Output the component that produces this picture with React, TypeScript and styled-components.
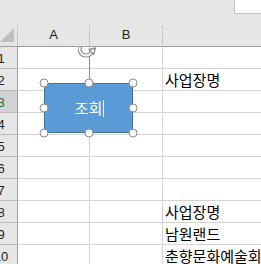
import React from 'react'
import styled, { createGlobalStyle } from 'styled-components'

const GlobalStyle = createGlobalStyle`
  html, body {
    margin: 0;
    padding: 0;
    background: #ffffff;
    overflow: hidden;
  }
`

const Page = styled.div`
  width: 261px;
  height: 264px;
  overflow: hidden;
  background: #ffffff;
  font-family: 'Noto Sans CJK KR', 'Noto Sans', sans-serif;
`

const TopBar = styled.div`
  height: 25px;
  background: #e6e6e6;
  display: flex;
  justify-content: flex-end;
  align-items: flex-start;
`

const NameBox = styled.div`
  width: 27px;
  height: 14px;
  box-sizing: border-box;
  background: #ffffff;
  border-left: 1px solid #c6c6c6;
  border-bottom: 1px solid #c6c6c6;
`

const Sheet = styled.div`
  margin-left: -15px;
  width: 478px;
`

const COLS = '33px 72px 73px 300px'

const HeaderRow = styled.div`
  display: grid;
  grid-template-columns: ${COLS};
  height: 22px;
  background: #e6e6e6;
`

const Corner = styled.div`
  box-sizing: border-box;
  border-right: 1px solid #c6c6c6;
  border-bottom: 1px solid #9e9e9e;
  display: flex;
  justify-content: flex-end;
  align-items: flex-end;
  padding: 0 3px 4px 0;
`

const SelectAll = styled.div`
  width: 14px;
  height: 14px;
  background: #bfbfbf;
  clip-path: polygon(100% 0, 100% 100%, 0 100%);
`

const ColHead = styled.div`
  box-sizing: border-box;
  border-right: 1px solid #c6c6c6;
  border-bottom: 1px solid #9e9e9e;
  display: flex;
  justify-content: center;
  align-items: center;
  padding-bottom: 3px;
  font-family: 'Liberation Sans', Arial, sans-serif;
  font-size: 13px;
  color: #222222;
`

const Body = styled.div`
  position: relative;
  overflow: hidden;
`

const Row = styled.div`
  display: grid;
  grid-template-columns: ${COLS};
  height: 22px;
`

const RowHead = styled.div<{ $active?: boolean }>`
  box-sizing: border-box;
  background: ${p => (p.$active ? '#d2d2d2' : '#e6e6e6')};
  border-right: 1px solid #9e9e9e;
  border-bottom: 1px solid #bcbcbc;
  display: flex;
  justify-content: center;
  align-items: center;
  padding-top: 1px;
  font-family: 'Liberation Sans', Arial, sans-serif;
  font-size: 13px;
  color: ${p => (p.$active ? '#217346' : '#222222')};
`

const Cell = styled.div`
  box-sizing: border-box;
  border-right: 1px solid #d4d4d4;
  border-bottom: 1px solid #d4d4d4;
  display: flex;
  align-items: flex-end;
  padding: 0 0 1px 2px;
  font-size: 15px;
  line-height: 18px;
  color: #000000;
  white-space: nowrap;
  overflow: hidden;
`

const Shape = styled.div`
  position: absolute;
  left: 59px;
  top: 36px;
  width: 89px;
  height: 50px;
  background: #5b9bd5;
  box-shadow: inset 0 0 0 1px #41719c;
  display: flex;
  justify-content: center;
  align-items: center;
  padding-left: 2px;
  box-sizing: border-box;
  color: #ffffff;
  font-size: 15px;
  line-height: 18px;
`

const Caret = styled.span`
  display: inline-block;
  width: 1px;
  height: 17px;
  margin-left: 1px;
  background: #ffffff;
`

const Handle = styled.div<{ $x: number; $y: number }>`
  position: absolute;
  left: ${p => p.$x}%;
  top: ${p => p.$y}%;
  width: 9px;
  height: 9px;
  box-sizing: border-box;
  border-radius: 50%;
  background: #ffffff;
  border: 1.5px solid #8c8c8c;
  transform: translate(-50%, -50%);
`

const RotateStem = styled.div`
  position: absolute;
  left: 45px;
  bottom: 100%;
  width: 1px;
  height: 26px;
  background: #8c8c8c;
`

const RotateIcon = styled.svg`
  position: absolute;
  left: 34px;
  top: -43px;
`

const rows = [
  { n: 1, c: '' },
  { n: 2, c: '사업장명' },
  { n: 3, c: '', active: true },
  { n: 4, c: '' },
  { n: 5, c: '' },
  { n: 6, c: '' },
  { n: 7, c: '' },
  { n: 8, c: '사업장명' },
  { n: 9, c: '남원랜드' },
  { n: 10, c: '춘향문화예술회관' },
]

const handles = [
  [0, 0], [50, 0], [100, 0],
  [0, 50], [100, 50],
  [0, 100], [50, 100], [100, 100],
]

const arc = 'M8 2.5 A6.5 6.5 0 1 0 13.6 12.3'

const App: React.FC = () => {
  return (
    <Page>
      <GlobalStyle />
      <TopBar>
        <NameBox />
      </TopBar>

      <Sheet>
        <HeaderRow>
          <Corner>
            <SelectAll />
          </Corner>
          <ColHead>A</ColHead>
          <ColHead>B</ColHead>
          <ColHead>C</ColHead>
        </HeaderRow>

        <Body>
          {rows.map(r => (
            <Row key={r.n}>
              <RowHead $active={r.active}>{r.n}</RowHead>
              <Cell />
              <Cell />
              <Cell>{r.c}</Cell>
            </Row>
          ))}

          <Shape>
            조회<Caret />
            <RotateStem />
            <RotateIcon width="20" height="18" viewBox="0 0 20 18">
              <path d={arc} fill="none" stroke="#8c8c8c" strokeWidth="4.2" />
              <path d={arc} fill="none" stroke="#ffffff" strokeWidth="1.8" />
              <path
                d="M11 9.5 L17.5 8 L15.5 14.5 Z"
                fill="#ffffff"
                stroke="#8c8c8c"
                strokeWidth="1.3"
                strokeLinejoin="round"
              />
            </RotateIcon>
            {handles.map(([x, y]) => (
              <Handle key={`${x}-${y}`} $x={x} $y={y} />
            ))}
          </Shape>
        </Body>
      </Sheet>
    </Page>
  )
}

export default App
